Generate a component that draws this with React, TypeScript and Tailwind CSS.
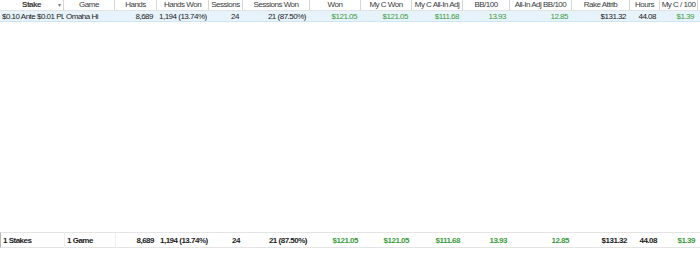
import React from "react";

type Col = {
  key: string;
  label: string;
  align: "left" | "right";
  green?: boolean;
};

const COLS: Col[] = [
  { key: "stake", label: "Stake", align: "left" },
  { key: "game", label: "Game", align: "left" },
  { key: "hands", label: "Hands", align: "right" },
  { key: "handsWon", label: "Hands Won", align: "right" },
  { key: "sessions", label: "Sessions", align: "right" },
  { key: "sessionsWon", label: "Sessions Won", align: "right" },
  { key: "won", label: "Won", align: "right", green: true },
  { key: "mycWon", label: "My C Won", align: "right", green: true },
  { key: "mycAdj", label: "My C All-In Adj", align: "right", green: true },
  { key: "bb100", label: "BB/100", align: "right", green: true },
  { key: "adjBb100", label: "All-In Adj BB/100", align: "right", green: true },
  { key: "rake", label: "Rake Attrib", align: "right" },
  { key: "hours", label: "Hours", align: "right" },
  { key: "myc100", label: "My C / 100", align: "right", green: true },
];

const GRID =
  "grid grid-cols-[64px_51px_42px_52px_34px_67px_51px_51px_51px_47px_62px_58px_30px_38px]";

const row: Record<string, string> = {
  stake: "$0.10 Ante $0.01 PL Hi",
  game: "Omaha Hi",
  hands: "8,689",
  handsWon: "1,194 (13.74%)",
  sessions: "24",
  sessionsWon: "21 (87.50%)",
  won: "$121.05",
  mycWon: "$121.05",
  mycAdj: "$111.68",
  bb100: "13.93",
  adjBb100: "12.85",
  rake: "$131.32",
  hours: "44.08",
  myc100: "$1.39",
};

const totals: Record<string, string> = {
  ...row,
  stake: "1 Stakes",
  game: "1 Game",
};

function Cell({ col, value, bold }: { col: Col; value: string; bold?: boolean }) {
  return (
    <div
      className={`overflow-hidden whitespace-nowrap ${
        col.align === "right" ? "pl-[2px] pr-[4px] text-right" : "pl-[2px] text-left"
      } ${col.green ? "text-[#3c9c3c]" : "text-[#1b1b1b]"} ${bold ? "font-bold" : ""}`}
    >
      {value}
    </div>
  );
}

export default function App() {
  return (
    <div className="flex h-[257px] w-[700px] flex-col overflow-hidden bg-white font-['Liberation_Sans',Arial,sans-serif] text-[8px] tracking-[-0.5px]">
      {/* header */}
      <div className={`${GRID} h-[11px] items-center border-b border-[#e2e2e2] bg-white leading-[10px]`}>
        {COLS.map((c) => (
          <div
            key={c.key}
            className={`relative h-[10px] overflow-hidden whitespace-nowrap border-r border-[#d6d6d6] text-center text-[#3a3a3a] ${
              c.key === "stake" ? "font-bold text-[#1b1b1b]" : ""
            }`}
          >
            {c.label}
            {c.key === "stake" ? (
              <span className="absolute right-[3px] top-0 text-[6px] font-normal text-[#777]">▾</span>
            ) : null}
          </div>
        ))}
      </div>

      {/* body */}
      <div className="flex-1">
        <div className={`${GRID} h-[11px] items-center border-b border-[#cfe5f4] bg-[#e7f3fb] leading-[11px]`}>
          {COLS.map((c) => (
            <Cell key={c.key} col={c} value={row[c.key]} />
          ))}
        </div>
      </div>

      {/* totals */}
      <div className={`${GRID} h-[16px] items-stretch border-y border-l border-[#e4e4e4] border-l-[#b8b8b8] leading-[15px]`}>
        {COLS.map((c) => (
          <div
            key={c.key}
            className={c.key === "stake" || c.key === "game" ? "border-r border-[#eeeeee]" : ""}
          >
            <Cell col={c} value={totals[c.key]} bold />
          </div>
        ))}
      </div>
      <div className="h-[9px]" />
    </div>
  );
}
